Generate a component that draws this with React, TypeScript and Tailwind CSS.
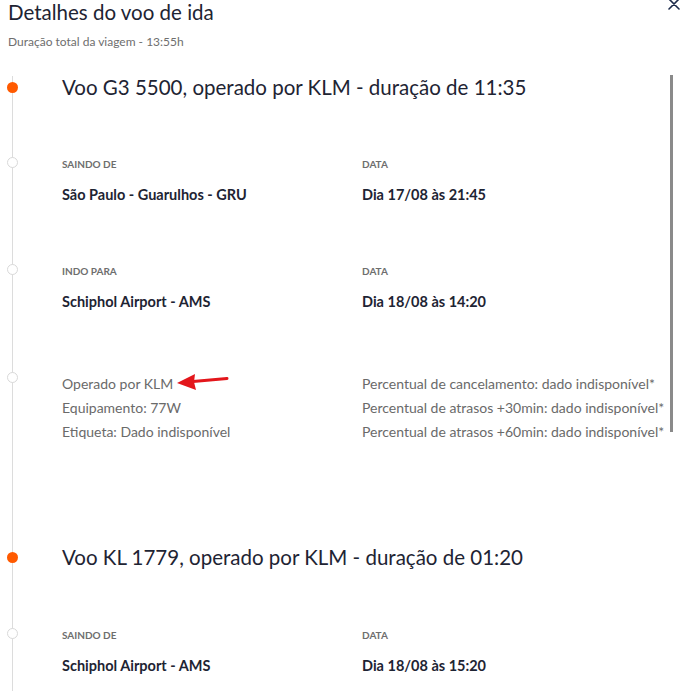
import React from 'react'

type Field = { label: string; value: string }

function Dot({ filled }: { filled?: boolean }) {
  return filled ? (
    <span className="block w-[11px] h-[11px] -ml-[6px] rounded-full bg-[#ff5a00] shrink-0" />
  ) : (
    <span className="block w-[11px] h-[11px] -ml-[6px] rounded-full bg-white border border-[#d9d9d9] shrink-0" />
  )
}

function FlightTitle({ text, className = '' }: { text: string; className?: string }) {
  return (
    <div className={`flex items-center h-[22px] ${className}`}>
      <Dot filled />
      <h3 className="ml-[44px] text-[20.5px] leading-[22px] text-[#1e2433] whitespace-nowrap">{text}</h3>
    </div>
  )
}

function FieldRow({ left, right, className = '' }: { left: Field; right: Field; className?: string }) {
  return (
    <div className={`flex items-start ${className}`}>
      <Dot />
      <div className="ml-[44px] grid grid-cols-[300px_300px]">
        {[left, right].map(f => (
          <div key={f.label}>
            <div className="text-[10px] leading-[14px] font-bold uppercase text-[#6e6e6e]">{f.label}</div>
            <div className="mt-[14px] text-[14.5px] leading-[20px] font-bold text-[#1e2433] whitespace-nowrap">{f.value}</div>
          </div>
        ))}
      </div>
    </div>
  )
}

export default function App() {
  return (
    <div className="relative w-[692px] h-[691px] overflow-hidden bg-white font-['Lato',sans-serif]">
      <div className="flex items-start justify-between px-2">
        <div>
          <h2 className="text-[20.5px] leading-[24px] text-[#1e2433]">Detalhes do voo de ida</h2>
          <p className="mt-[10px] text-[12px] leading-[16px] text-[#6e6e6e]">Duração total da viagem - 13:55h</p>
        </div>
        <svg width="12" height="12" viewBox="0 0 12 12" className="mr-[4px] -mt-[2px]">
          <path d="M1 1L11 11M11 1L1 11" stroke="#1c2a4a" strokeWidth="1.6" strokeLinecap="round" />
        </svg>
      </div>

      <div className="relative mt-[26px] ml-[12px] border-l border-[#dcdcdc] pb-6">
        <FlightTitle text="Voo G3 5500, operado por KLM - duração de 11:35" />
        <FieldRow
          className="mt-[59px]"
          left={{ label: 'Saindo de', value: 'São Paulo - Guarulhos - GRU' }}
          right={{ label: 'Data', value: 'Dia 17/08 às 21:45' }}
        />
        <FieldRow
          className="mt-[59px]"
          left={{ label: 'Indo para', value: 'Schiphol Airport - AMS' }}
          right={{ label: 'Data', value: 'Dia 18/08 às 14:20' }}
        />
        <div className="relative flex items-start mt-[60px]">
          <Dot />
          <div className="ml-[44px] grid grid-cols-[300px_300px] text-[14px] leading-[24px] text-[#6a6a6a]">
            <div>
              <div>Operado por KLM</div>
              <div>Equipamento: 77W</div>
              <div>Etiqueta: Dado indisponível</div>
            </div>
            <div className="whitespace-nowrap">
              <div>Percentual de cancelamento: dado indisponível*</div>
              <div>Percentual de atrasos +30min: dado indisponível*</div>
              <div>Percentual de atrasos +60min: dado indisponível*</div>
            </div>
          </div>
          <svg width="56" height="20" viewBox="0 0 56 20" className="absolute left-[162px] top-0">
            <path d="M52 6.5L18 9.5" stroke="#e3161b" strokeWidth="3" strokeLinecap="round" />
            <path d="M2 11L20 2L19 10L21 18Z" fill="#e3161b" />
          </svg>
        </div>
        <FlightTitle className="mt-[102px]" text="Voo KL 1779, operado por KLM - duração de 01:20" />
        <FieldRow
          className="mt-[60px]"
          left={{ label: 'Saindo de', value: 'Schiphol Airport - AMS' }}
          right={{ label: 'Data', value: 'Dia 18/08 às 15:20' }}
        />
      </div>

      <div className="absolute left-[670px] top-[75px] w-[3px] h-[357px] bg-[#8a8a8a]" />
    </div>
  )
}
